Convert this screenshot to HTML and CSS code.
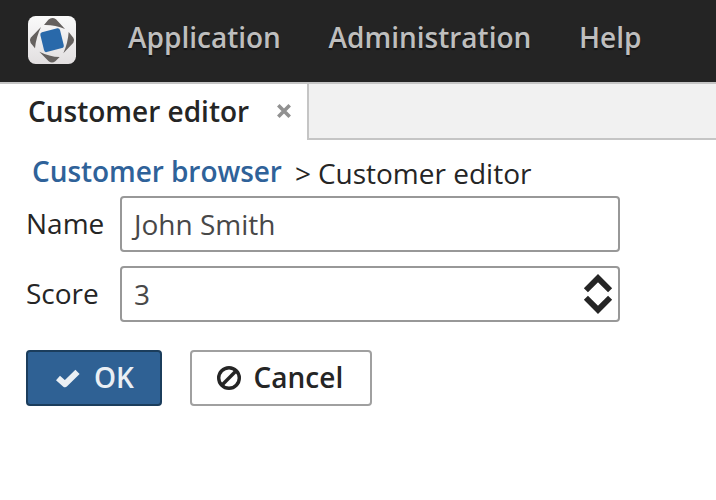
FILE: index.html
```html
<!DOCTYPE html>
<html lang="en">
<head>
<meta charset="utf-8">
<title>Customer editor</title>
<link rel="stylesheet" href="styles.css">
</head>
<body>
<header class="menubar">
  <svg class="logo" viewBox="0 0 144 144" aria-hidden="true">
    <defs><linearGradient id="tile" x1="0" y1="0" x2="0" y2="1"><stop offset="0" stop-color="#fafafa"/><stop offset="1" stop-color="#e2dfe0"/></linearGradient></defs>
    <rect width="144" height="144" rx="23" fill="url(#tile)"/>
    <g fill="#65615f">
      <path d="M48 27L61 11Q72 2 84 10L111 39Q80 26 48 27Z"/>
      <path d="M122 48L136 65Q141 72 136 80L106 112Q120 80 122 48Z"/>
      <path d="M95 123L82 136Q72 143 62 136L34 107Q64 122 95 123Z"/>
      <path d="M21 97L8 81Q3 73 8 65L39 33Q24 64 21 97Z"/>
    </g>
    <path d="M42 49L88 37Q94 36 96 42L107 86Q109 94 102 96L56 108Q50 110 48 102L37 57Q36 51 42 49Z" fill="#2969aa"/>
  </svg>
  <nav class="menu"><span>Application</span><span>Administration</span><span>Help</span></nav>
</header>
<div class="tabs">
  <div class="tab"><span>Customer editor</span>
    <svg class="close" viewBox="0 0 14 14" aria-hidden="true"><path d="M1.3 1.3L12.7 12.7M12.7 1.3L1.3 12.7"/></svg>
  </div>
  <div class="tab-space"></div>
</div>
<main>
  <div class="crumbs"><a class="crumb-link">Customer browser</a><span class="crumb-sep">&gt;</span><span class="crumb-current">Customer editor</span></div>
  <div class="form">
    <label class="label">Name</label><div class="field">John Smith</div>
    <label class="label">Score</label>
    <div class="field"><span>3</span>
      <svg class="spinner" viewBox="0 0 28 40" aria-hidden="true"><path d="M1.9 16.3L14 4.2L26.1 16.3M1.9 23.7L14 35.8L26.1 23.7"/></svg>
    </div>
  </div>
  <div class="actions">
    <div class="button primary">
      <svg class="icon check" viewBox="0 0 26 20" aria-hidden="true"><path d="M3 10L10 16.2L22.5 3.8"/></svg><span>OK</span>
    </div>
    <div class="button">
      <svg class="icon ban" viewBox="0 0 24 24" aria-hidden="true"><circle cx="12" cy="12" r="10.3"/><path d="M4.8 19.2L19.2 4.8"/></svg><span>Cancel</span>
    </div>
  </div>
</main>
</body>
</html>
```
FILE: styles.css
```css
* { box-sizing: border-box; }
body {
  margin: 0;
  background: #fff;
  color: #252525;
  font: 400 28px/38px "Open Sans", sans-serif;
  overflow: hidden;
}
svg { display: block; flex: none; overflow: visible; }
.menubar {
  display: flex;
  height: 82px;
  padding: 16px 28px;
  background: #242424;
}
.logo { width: 48px; height: 48px; }
.menu {
  display: flex;
  gap: 47.6px;
  margin: 2px 0 0 52px;
  color: #bebebe;
  font-weight: 600;
  text-shadow: 0 2px 1px rgba(0, 0, 0, .45);
}
.tabs {
  display: flex;
  height: 58px;
  border-top: 2px solid #c5c5c5;
}
.tab {
  display: flex;
  width: 307px;
  padding: 8px 0 0 28px;
  font-weight: 600;
}
.close { width: 14px; height: 14px; margin: 12px 0 0 28px; }
.close path { stroke: #919191; stroke-width: 3.6; }
.tab-space {
  flex: 1;
  background: #f1f1f1;
  border-left: 2px solid #c5c5c5;
  border-bottom: 2px solid #c5c5c5;
}
.crumbs { display: flex; height: 56px; padding: 12px 32px 0; }
.crumb-link { color: #2f6299; font-weight: 600; letter-spacing: -.06px; }
.crumb-sep { margin: 2px 7px 0 13px; }
.crumb-current { margin-top: 2px; }
.form {
  display: grid;
  grid-template-columns: 94px 500px;
  row-gap: 14px;
  padding-left: 26px;
}
.label { padding-top: 8px; }
.field {
  display: flex;
  justify-content: space-between;
  height: 56px;
  padding: 7px 6px 0 12px;
  border: 2px solid #989898;
  border-radius: 4px;
  color: #484848;
}
.spinner { width: 28px; height: 40px; margin-top: -1px; }
.spinner path { fill: none; stroke: #252525; stroke-width: 5.8; }
.actions { display: flex; gap: 28px; padding: 28px 26px; }
.button {
  display: flex;
  width: 182px;
  height: 56px;
  padding: 6px 0 0 25px;
  border: 2px solid #a0a0a0;
  border-radius: 4px;
  font-weight: 600;
}
.primary {
  width: 136px;
  padding-left: 27px;
  background: #2f6194;
  border-color: #1b3d5c;
  color: #eaeff4;
}
.icon { fill: none; stroke: currentColor; }
.check { width: 26px; height: 20px; margin: 10px 13px 0 0; stroke-width: 6; stroke-linejoin: round; }
.ban { width: 24px; height: 24px; margin: 8px 12.6px 0 0; stroke-width: 3.4; }
```
